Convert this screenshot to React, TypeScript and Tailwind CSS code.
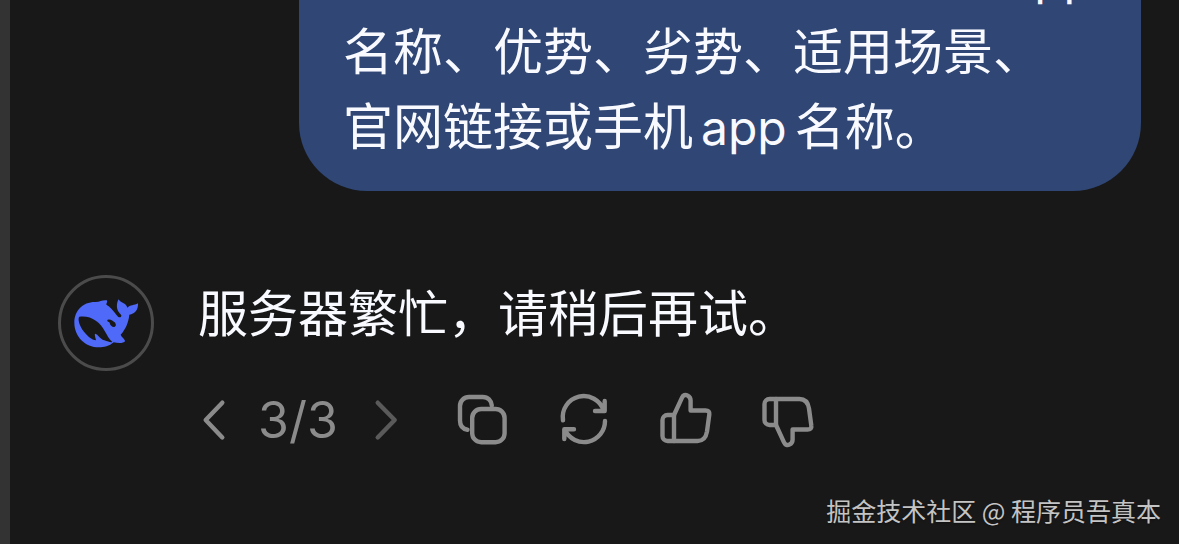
import type { ReactNode } from "react";

function Icon({ children, className = "w-14" }: { children: ReactNode; className?: string }) {
  return (
    <svg
      className={`h-14 ${className}`}
      fill="none"
      stroke="currentColor"
      strokeWidth="4.4"
      strokeLinecap="round"
      strokeLinejoin="round"
      aria-hidden="true"
    >
      {children}
    </svg>
  );
}

function Thumb() {
  return (
    <>
      <path d="M16 23 24 5.6C25.2 3 27.4 2.4 29.4 3.4C31.6 4.4 32.6 6 32.6 8.5V18.5H47.5C50.5 18.5 51.7 20 51.3 22.5L49 39.5C48 45.5 45 49 39.5 49H9.5A5 5 0 0 1 4.5 44V28A5 5 0 0 1 9.5 23Z" />
      <path d="M16 23V49" />
    </>
  );
}

function Whale() {
  return (
    <svg className="w-18 shrink-0" viewBox="60 95 216 162" aria-hidden="true">
      <path
        fill="#4f69f8"
        fillRule="evenodd"
        d="M73 175C73 140 98 112 137 113C149 113 158 107 168 108C175 108 170 115 169 121C180 127 190 139 199 151C204 158 209 161 213 157C216 154 213 151 209 147C199 137 198 117 206 105C211 116 229 115 232 130C240 121 253 124 264 117C265 137 254 150 238 151C236 172 227 195 212 211C215 219 226 225 225 231C221 238 203 237 191 234C178 246 161 249 147 249C105 249 73 216 73 175ZM88 157C82 163 89 187 102 202C112 215 125 226 138 228C137 219 132 210 136 208C144 210 149 223 163 228C174 232 182 235 187 233C176 224 172 213 164 200C150 172 122 152 88 157ZM173 166C169 171 176 171 179 175C180 183 187 189 193 188C200 186 198 178 194 174C189 169 181 163 173 166Z"
      />
    </svg>
  );
}

export default function App() {
  return (
    <div className="flex min-h-screen overflow-hidden bg-[#181818] font-[Inter,'Noto_Sans_CJK_SC',sans-serif]">
      <div className="w-2.5 shrink-0 bg-[#333333]" />
      <main className="flex min-w-0 flex-1 flex-col">
        <div className="-mt-[60px] mr-[38px] ml-[289px] rounded-b-[68px] bg-[#304674] px-11 pb-[26px] text-[50px] leading-[75px] text-[#f8faff]">
          <p className="pr-1 text-right">
            <span className="text-[48px] leading-none">app</span>
          </p>
          <p>名称、优势、劣势、适用场景、</p>
          <p>
            官网链接或手机<span className="mx-2 text-[48px] leading-none">app</span>名称。
          </p>
        </div>

        <section className="mt-[84px] flex items-start gap-11 pl-12">
          <div className="flex size-24 shrink-0 items-center justify-center rounded-full border-3 border-[#4b4b4b]">
            <Whale />
          </div>
          <div className="pt-0.5">
            <p className="text-[50px] leading-[75px] text-[#f8faff]">服务器繁忙，请稍后再试。</p>
            <div className="mt-10 flex items-center text-[#8b8b8b]">
              <button type="button" aria-label="上一条">
                <Icon className="w-8">
                  <path d="M24.3 10.7 7.7 28 24.3 45.5" />
                </Icon>
              </button>
              <span className="mx-7 w-21 text-[50px] leading-14">3/3</span>
              <button type="button" aria-label="下一条" className="text-[#5a5a5a]">
                <Icon className="w-8">
                  <path d="M7.7 10.7 24.7 28 7.7 45.5" />
                </Icon>
              </button>
              <div className="ml-13 flex gap-[46px]">
                <button type="button" aria-label="复制">
                  <Icon>
                    <rect x="18.2" y="17" width="32.4" height="33.2" rx="9" />
                    <path d="M37.8 13.5C37.3 8.3 34 5 28.8 5H15A9 9 0 0 0 6 14V28.5C6 33.5 8.6 37 13.5 37.7" />
                  </Icon>
                </button>
                <button type="button" aria-label="重新生成">
                  <Icon>
                    <path d="M7 28.3A21 21 0 0 1 47.7 18.5M48.7 9V19H39" />
                    <path d="M49 29A21 21 0 0 1 9 38M8.3 47V37.2H18" />
                  </Icon>
                </button>
                <button type="button" aria-label="赞">
                  <Icon>
                    <Thumb />
                  </Icon>
                </button>
                <button type="button" aria-label="踩">
                  <Icon className="w-14 -scale-y-100">
                    <Thumb />
                  </Icon>
                </button>
              </div>
            </div>
          </div>
        </section>

        <footer className="mt-auto pr-[18px] pb-3.5 text-right font-['Noto_Sans_CJK_SC',sans-serif] text-[25px] leading-10 text-[#c4c4c4] text-shadow-sm">
          掘金技术社区 @ 程序员吾真本
        </footer>
      </main>
    </div>
  );
}
